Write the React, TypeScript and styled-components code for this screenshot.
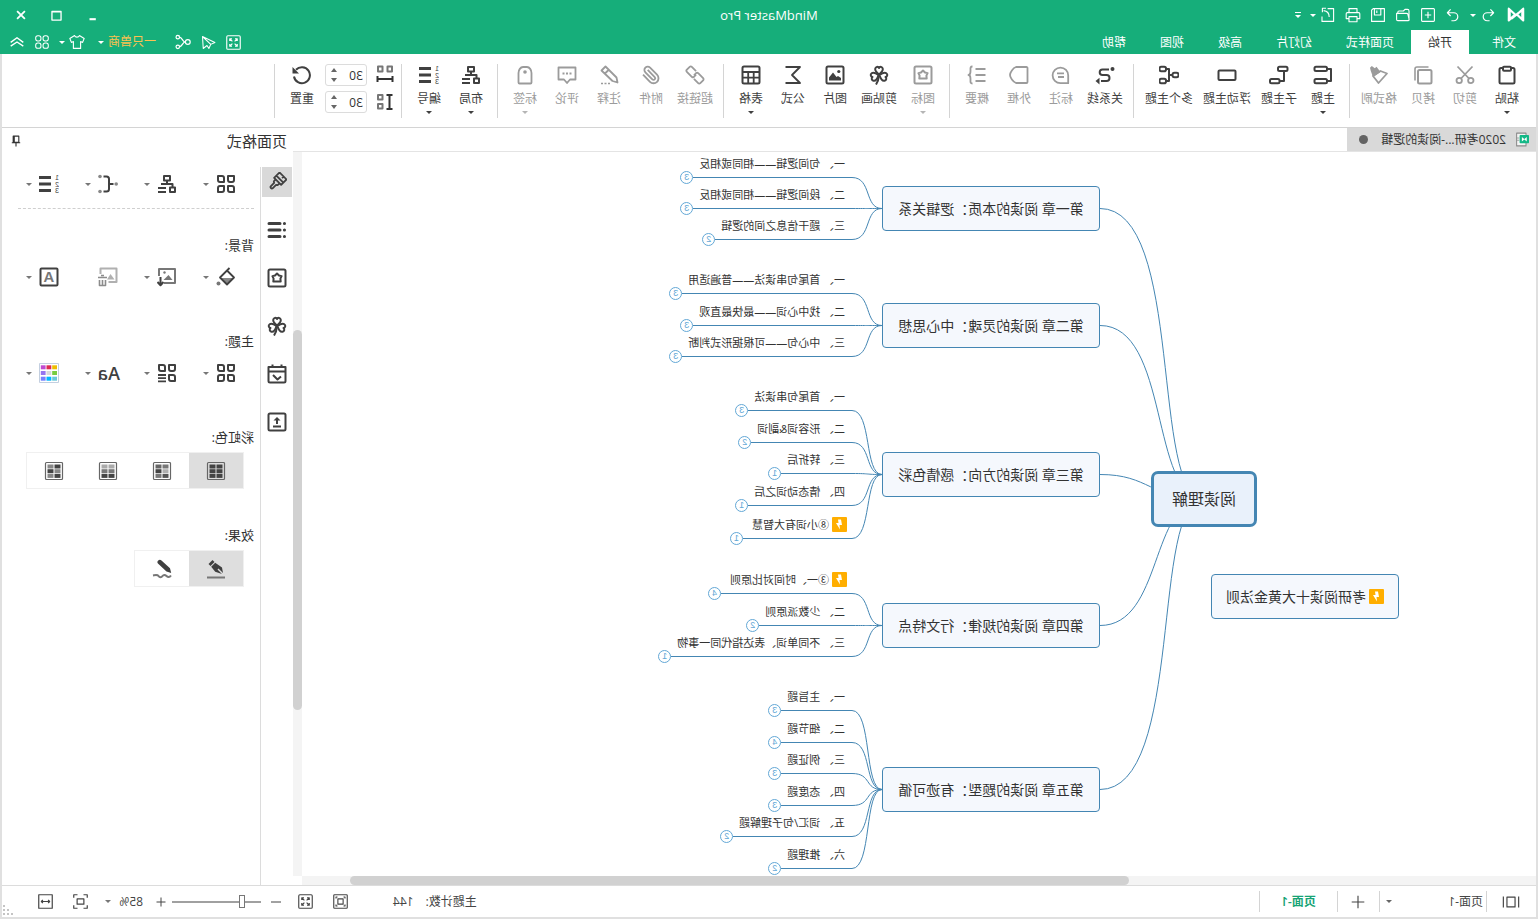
import React from "react";
import styled, { createGlobalStyle, css } from "styled-components";

const ink = "#404040";
const green = "#16ae7a";
const line = "#4486b3";
const rule = "#d4d4d4";

const GlobalStyle = createGlobalStyle`
  *, *::before, *::after { box-sizing: border-box; }
  body { margin: 0; background: #fff; }
  button, input, select { font: inherit; color: inherit; }
  button { border: 0; background: none; padding: 0; }
`;

/* The whole window is shown mirrored, as seen from behind the screen. */
const Window = styled.div`
  min-height: 100vh;
  display: flex;
  flex-direction: column;
  transform: scaleX(-1);
  font: 12px/16px "Open Sans", "Noto Sans CJK SC", sans-serif;
  color: #333;
  background: #fff;
`;

/* ---------- icons ---------- */

const Svg = styled.svg<{ $size: number; $weight: number }>`
  display: block;
  flex: none;
  width: ${(p) => p.$size}px;
  height: ${(p) => p.$size}px;
  fill: none;
  stroke: currentColor;
  stroke-width: ${(p) => p.$weight};
  stroke-linejoin: round;
`;

const Glyph = styled.text`
  fill: currentColor;
  stroke: none;
  font-family: "Liberation Sans", sans-serif;
`;

const threeSquares = (
  <>
    <path d="M2 2h6v4a2 2 0 0 1-2 2H4a2 2 0 0 1-2-2z" />
    <path d="M12 4a2 2 0 0 1 2-2h4v4a2 2 0 0 1-2 2h-4z" />
    <path d="M4 12h4v4a2 2 0 0 1-2 2H2v-4a2 2 0 0 1 2-2z" />
  </>
);

const clover = (
  <>
    <path d="M10 9.500C7 7 6 5.500 6.200 3.800 6.500 1.600 9 1.200 10 3c1-1.800 3.500-1.400 3.800.8C14 5.500 13 7 10 9.500z" />
    <path d="M9.500 10C6 7.500 4 7.200 2.700 8.200c-1.800 1.400-.9 3.400.8 3.800-1.400 1.200-.8 3.400 1 3.800C6.800 16.200 8.500 13.500 9.500 10z" />
    <path d="M10.500 10c3.500-2.500 5.500-2.800 6.800-1.800 1.800 1.400.9 3.400-.8 3.800 1.400 1.200.8 3.400-1 3.800-2.300.4-4-2.300-5-5.800z" />
    <path d="M10 10c.3 4 1.200 7 3 9.500" />
  </>
);

const numbering = (
  <>
    <path d="M8 3.500h12M8 10h12M8 16.500h12" strokeWidth="3" />
    <Glyph x="0" y="6" fontSize="7">1</Glyph>
    <Glyph x="0" y="12.500" fontSize="7">2</Glyph>
    <Glyph x="0" y="19" fontSize="7">3</Glyph>
  </>
);

const swatches = (colours: string[]) => (
  <>
    <rect x="1.500" y="1.500" width="17" height="17" rx="1" stroke="#666" strokeWidth="1.200" />
    {colours.map((c, i) => (
      <rect key={i} x={i % 2 ? 10.5 : 3.5} y={3.5 + Math.floor(i / 2) * 4.7} width="6" height="4" fill={c} stroke="none" />
    ))}
  </>
);

const icons: Record<string, React.ReactNode> = {
  paste: (
    <>
      <rect x="2.500" y="3" width="15" height="15.500" rx="1.500" />
      <rect x="6" y="1.800" width="8" height="4" rx="1" fill="#fff" />
    </>
  ),
  cut: (
    <>
      <circle cx="4.200" cy="15.500" r="2.700" strokeWidth="1.800" />
      <circle cx="15.800" cy="15.500" r="2.700" strokeWidth="1.800" />
      <path d="M2.500 1.500L14 13.500M17.500 1.500L6 13.500" strokeWidth="1.800" />
    </>
  ),
  copy: (
    <>
      <rect x="1.500" y="5" width="13.500" height="13.500" rx="1.500" />
      <path d="M4.500 2H16a2 2 0 0 1 2 2v11.500" strokeWidth="1.600" />
    </>
  ),
  brush: (
    <>
      <path d="M19 2.800L17.200 1l-3 2.300L12.500 1.800 8.500 7l7.500 5 2.200-6z" fill="currentColor" stroke="none" />
      <path d="M8.500 6L2 8.500l8.500 9.500 5.500-7z" strokeWidth="1.800" />
    </>
  ),
  topic: (
    <>
      <rect x="6" y="1.800" width="12.500" height="4.200" rx="1.500" />
      <rect x="6" y="14" width="12.500" height="4.200" rx="1.500" />
      <path d="M6 4H2v12h4" />
    </>
  ),
  subtopic: (
    <>
      <rect x="1.500" y="1.800" width="9.500" height="4.200" rx="1.500" />
      <rect x="9.500" y="14" width="9.500" height="4.200" rx="1.500" />
      <path d="M5 6v10h4.500" />
    </>
  ),
  floating: <rect x="1.500" y="5.500" width="17" height="9.500" rx="1" />,
  multi: (
    <>
      <rect x="0.500" y="7.800" width="6" height="4.400" rx="2" />
      <rect x="13" y="1.800" width="6.500" height="4.400" rx="1.800" />
      <rect x="13" y="13.800" width="6.500" height="4.400" rx="1.800" />
      <path d="M6.500 10H10M13 4h-3v12h3" />
    </>
  ),
  relation: (
    <>
      <path d="M6 4.500h6.500a2.800 2.800 0 0 1 0 5.600H8.500a3 3 0 0 0 0 6H14" />
      <circle cx="2.500" cy="4" r="2" fill="currentColor" stroke="none" />
      <path d="M15.500 12.800l4 3.300-4 3.300z" fill="currentColor" stroke="none" />
    </>
  ),
  callout: (
    <>
      <path d="M2.800 18.200V10.500a7.800 7.800 0 1 1 7.800 7.700z" strokeWidth="1.800" />
      <path d="M7 8.300h7M7 12h6" strokeWidth="1.800" />
    </>
  ),
  boundary: <path d="M2.500 2H13c3 1 6 5.500 6 8s-3 7-6 8H2.500a1 1 0 0 1-1-1V3a1 1 0 0 1 1-1z" strokeWidth="1.800" />,
  summary: (
    <>
      <path d="M1.500 4h10M1.500 10h10M1.500 16h10" />
      <path d="M14.500 1.500c2.500 0 2 1.500 2 4.500 0 2.500 0 4 2 4-2 0-2 1.500-2 4 0 3 .5 4.500-2 4.500" strokeWidth="1.800" />
    </>
  ),
  flower: (
    <>
      <rect x="1.500" y="1.500" width="17" height="17" rx="1.500" />
      <path d="M10 5.500l2 2 2.600.6-1.200 2.500.3 2.900H6.300l.3-2.900-1.200-2.500L8 7.500z" />
    </>
  ),
  clover,
  picture: (
    <>
      <rect x="1.500" y="1.500" width="17" height="17" rx="1.500" />
      <path d="M4 15.500v-2.500l3-2 1.500 1L12 7.500l4 5v3z" fill="currentColor" stroke="none" />
      <circle cx="6.200" cy="6.500" r="1.600" fill="currentColor" stroke="none" />
    </>
  ),
  sigma: <path d="M17.500 2H3l8 8-8 8h14.500" strokeWidth="1.800" />,
  table: (
    <>
      <rect x="1.500" y="1.500" width="17" height="17" rx="1.500" />
      <path d="M1.500 7h17M1.500 12.700h17M7.300 7v11.500M12.800 7v11.500" strokeWidth="1.800" />
    </>
  ),
  link: (
    <g transform="rotate(-45 10 10)" strokeWidth="1.800">
      <path d="M8 13.500H2A1.500 1.500 0 0 1 .5 12V8A1.500 1.500 0 0 1 2 6.500h7A1.500 1.500 0 0 1 10.500 8v3" />
      <path d="M12 6.500h6A1.500 1.500 0 0 1 19.500 8v4a1.500 1.500 0 0 1-1.500 1.500h-7A1.500 1.500 0 0 1 9.500 12V9" />
    </g>
  ),
  clip: (
    <g transform="scale(.83)" strokeWidth="2.200">
      <path d="m16 6-8.414 8.586a2 2 0 0 0 2.829 2.829l8.414-8.586a4 4 0 1 0-5.657-5.657l-8.379 8.551a6 6 0 1 0 8.485 8.485l8.379-8.551" />
    </g>
  ),
  note: (
    <>
      <path d="M13.500 1.500l4 4L6.500 16 1.500 17.500l1-5zM10 4.500l4.500 4.500" strokeWidth="1.800" />
      <path d="M9 18.500h10" strokeDasharray="2 1.500" strokeWidth="1.600" />
    </>
  ),
  comment: (
    <>
      <path d="M1.500 2.500h17v12h-5.500l-3 3.500-3-3.500H1.500z" strokeWidth="1.800" />
      <path d="M5.500 8.500h9.500" strokeDasharray="2 1.500" />
    </>
  ),
  tag: (
    <>
      <path d="M3.500 17.500V8c0-3 2-6 4.500-6h4c2.500 0 4.500 3 4.500 6v9.500a1 1 0 0 1-1 1h-11a1 1 0 0 1-1-1z" strokeWidth="1.800" />
      <circle cx="10" cy="7" r="1.800" fill="currentColor" stroke="none" />
    </>
  ),
  layout: <path d="M7 2h6v4.500H7zM2 13.500h5V18H2zM10 6.500V10M4.500 13.500V10H16M11 14h8M11 18h8" />,
  numbering,
  reset: (
    <>
      <path d="M16 4.800A8 8 0 1 0 18 11.500" />
      <path d="M19.500 2v6.500H13z" fill="currentColor" stroke="none" />
    </>
  ),
  hspace: (
    <>
      <path d="M3 1.500h4.500v5H3zM12.500 1.500H17v5h-4.500z" stroke="#777" />
      <path d="M2.500 14h15M2.500 11v6M17.500 11v6" />
    </>
  ),
  vspace: (
    <>
      <path d="M12.500 3H17v4.500h-4.500zM12.500 12H17v4.500h-4.500z" stroke="#777" />
      <path d="M5.500 3v14M2.500 3h6M2.500 17h6" />
    </>
  ),
  logo: <path d="M2 3l7 6.500L2 16zM18 3l-7 6.500L18 16zM3 4.500v11M17 4.500v11M5 6l10 8" strokeWidth="2.400" />,
  undo: <path d="M7 3L3 7.200l4 4M3.500 7.200H11a5 5 0 0 1 0 10H8" />,
  redo: <path d="M13 3l4 4.200-4 4M16.500 7.200H9a5 5 0 0 0 0 10h3" />,
  fresh: <path d="M3 2h14a1 1 0 0 1 1 1v14a1 1 0 0 1-1 1H3a1 1 0 0 1-1-1V3a1 1 0 0 1 1-1zM10 6v8M6 10h8" />,
  open: <path d="M2.500 16.500V5c0-1.500.5-2 2-2h3l2 2h5.500c1 0 1.500.7 1.500 2v1M5.500 8H18v7.500c0 1-.5 1.500-1.500 1.500H3.500c-1 0-1.500-.7-1.200-1.500L4 9c.2-.7.700-1 1.500-1z" />,
  save: <path d="M2 2h14l2 2v14H2zM6.500 2v8h8V2M11.500 4.500v3" />,
  print: <path d="M5 7V2h10v5M5 14.500H1.500V8.500C1.500 7.500 2 7 3 7h14c1 0 1.500.5 1.500 1.500v6H15M5 12h10v6.500H5z" />,
  export: <path d="M10.500 2H3v16h14.500v-6M8.500 12.500C8.500 8 11 5 15.500 4.500M12.500 1.500h4.500v5" />,
  fullscreen: (
    <>
      <rect x="1" y="1" width="18" height="18" rx="1.500" />
      <path d="M5 8V5h3M12 5h3v3M15 12v3h-3M8 15H5v-3M5 5l3.500 3.500M15 5l-3.500 3.500M15 15l-3.500-3.500M5 15l3.500-3.500" />
    </>
  ),
  send: <path d="M18 2L1.500 10l5.500 2.500L18 2l-1 16-5-4-2.500 4-2.500-5.500" />,
  share: (
    <>
      <circle cx="4" cy="10" r="3" />
      <circle cx="16.500" cy="4" r="2.200" />
      <circle cx="16.500" cy="16" r="2.200" />
      <path d="M7 10c4 0 3-5 7.300-6M7 10c4 0 3 5 7.300 6" />
    </>
  ),
  shirt: <path d="M7 2L1 5.500l2 5 2.500-1V18h9V9.500l2.500 1 2-5L13 2c-1 2.500-5 2.500-6 0z" />,
  apps: (
    <>
      <rect x="1" y="1" width="7.500" height="7.500" rx="3" />
      <rect x="11.500" y="1" width="7.500" height="7.500" rx="3" />
      <rect x="1" y="11.500" width="7.500" height="7.500" rx="3" />
      <rect x="11.500" y="11.500" width="7.500" height="7.500" rx="3" />
    </>
  ),
  collapse: <path d="M1 10.500l9-6.500 9 6.500M1 16l9-6 9 6" />,
  minimize: <path d="M6 16h9" strokeWidth="3" />,
  maximize: <path d="M3 3.500h14v13.500H3zM3 4.500h14" />,
  close: <path d="M3.500 3.500l13 13M16.500 3.500l-13 13" />,
  doc: (
    <>
      <path d="M4 1.500h12.500v17H4z" stroke="#8a8a8a" strokeWidth="1.400" fill="#f4f4f4" />
      <path d="M13 8h3M13 11h3" stroke="#8a8a8a" strokeWidth="1" />
      <rect x="0" y="4" width="12.500" height="11" rx="1" fill="#12b886" stroke="none" />
      <path d="M3 6.500v6l3.500-3zM9.500 6.500v6L6 9.500z" fill="#fff" stroke="none" />
    </>
  ),
  pin: <path d="M6 3h8v9H6zM4 12.500h12M10 13v5M12.500 3v9" />,
  paint: (
    <>
      <path d="M2.500 11h13L9 17.500z" fill="#888" stroke="none" />
      <path d="M9 3.500l7 7L9 17.500l-7-7zM6.500 1L10 4.500" strokeWidth="1.800" />
      <circle cx="17.500" cy="16.500" r="2" fill="#777" stroke="none" />
    </>
  ),
  list: (
    <>
      <path d="M7 3.500h11M7 10h11M7 16.500h11" strokeWidth="3" strokeLinecap="round" />
      <path d="M2.500 3.500h.1M2.500 10h.1M2.500 16.500h.1" strokeWidth="3" strokeLinecap="round" />
    </>
  ),
  format: (
    <g transform="translate(1 1) scale(.9) rotate(-45 10 10)">
      <path d="M4.500 .5h11v8.500h-11zM4.500 5.500h11M9 .5v2.500M7 9v3l1.500 1v5a1.500 1.500 0 0 0 3 0v-5l1.500-1V9" />
    </g>
  ),
  calendar: <path d="M1.500 3h17v14a1.500 1.500 0 0 1-1.500 1.500H3A1.500 1.500 0 0 1 1.500 17zM1.500 7.500h17M5.500 .5v3M14.500 .5v3M14 11l-4.500 4.500-3.500-3" />,
  upload: (
    <>
      <rect x="1.500" y="1.500" width="17" height="17" rx="1.500" />
      <path d="M10 12V6M6 14.500h8" />
      <path d="M6.500 8.500L10 5l3.500 3.500z" fill="currentColor" stroke="none" />
    </>
  ),
  four: (
    <>
      {threeSquares}
      <path d="M12 12h4a2 2 0 0 1 2 2v4h-4a2 2 0 0 1-2-2z" />
    </>
  ),
  fourList: (
    <>
      {threeSquares}
      <path d="M11 12h8M11 15.200h8M11 18.400h8" strokeWidth="1.800" />
    </>
  ),
  bracket: (
    <>
      <path d="M4.500 10H9M14.500 2.500h-3C9.500 2.500 9 3 9 5v10c0 2 .5 2.500 2.500 2.500h3" />
      <circle cx="1.800" cy="10" r="1.800" fill="#888" stroke="none" />
      <circle cx="18" cy="2.500" r="1.800" fill="#888" stroke="none" />
      <circle cx="18" cy="17.500" r="1.800" fill="#888" stroke="none" />
    </>
  ),
  insertPic: (
    <>
      <path d="M13 16H2V2h16v7" stroke="#777" />
      <path d="M4.500 13l4-5 5 5z" fill="#777" stroke="none" />
      <circle cx="12.500" cy="5.500" r="1.200" fill="#777" stroke="none" />
      <path d="M16.500 10v8M13.500 15l3 3.200 3-3.200" />
    </>
  ),
  deletePic: (
    <>
      <path d="M9.500 15H1.500V1.500h16V7" />
      <path d="M3.500 12.500l4-5.500 3.500 5.500z" fill="currentColor" stroke="none" />
      <path d="M11 10.500h9M12.500 13v5.500h6V13M15.500 13v5M14 8.500h3" stroke="#8c8c8c" strokeWidth="1.600" />
    </>
  ),
  letter: (
    <>
      <rect x="1.500" y="1.500" width="17" height="17" rx="1" />
      <Glyph x="4.700" y="15" fontSize="15" fontWeight="bold" opacity=".7">A</Glyph>
    </>
  ),
  palette: (
    <>
      <rect x="0.500" y="0.500" width="19" height="19" stroke="#c3cfe0" strokeWidth="1" />
      {["#edbd00", "#de2b4f", "#c04bd0", "#77cc3f", "#d9d9d9", "#9575f0", "#6bc9d9", "#00b7ff", "#7582ff"].map((c, i) => (
        <rect key={c} x={2 + (i % 3) * 5.7} y={2.3 + Math.floor(i / 3) * 5.7} width="4.800" height="4" fill={c} stroke="none" />
      ))}
    </>
  ),
  rainbow1: swatches(["#444", "#444", "#444", "#444", "#444", "#444"]),
  rainbow2: swatches(["#777", "#666", "#b0b0b0", "#444", "#555", "#777"]),
  rainbow3: swatches(["#aaa", "#aaa", "#777", "#777", "#444", "#444"]),
  rainbow4: swatches(["#444", "#888", "#888", "#444", "#444", "#888"]),
  pen: (
    <>
      <path d="M1 18.500h18" stroke="#777" />
      <path d="M13.500 1l4 4-2 2-4-4zM10.800 3.700l4 4-4 5L4 15l4.500-4.500-1-1L3 14l1-5.500z" fill="currentColor" stroke="none" />
    </>
  ),
  pencil: (
    <>
      <path d="M1 16.500c1.500 2 3 2 4.500.500s3-1.500 4 0 3 1.500 4 0 2.500-1 5.500-.500" stroke="#777" />
      <path d="M10.500 1.500a2.300 2.300 0 0 1 3.300 3.300L5.500 12.500.8 14l1.200-4.800z" fill="currentColor" stroke="none" />
    </>
  ),
  pageView: <path d="M5.500 4.500h9v11h-9zM1.500 4v12M18.500 4v12" />,
  plus: <path d="M10 1v18M1 10h18" />,
  minus: <path d="M0 10h20" />,
  fitPage: (
    <>
      <rect x="1" y="1" width="18" height="18" rx="1" />
      <path d="M6.500 6.500h7v7h-7zM4 6V4h2M14 4h2v2M16 14v2h-2M6 16H4v-2" />
    </>
  ),
  fitSel: <path d="M5.500 6.500h9v7h-9zM1 5V1h5M14 1h5v4M19 15v4h-5M6 19H1v-4" />,
  fitWidth: <path d="M1 1h18v18H1zM4 10h12M6.500 8l-2 2 2 2M13.500 8l2 2-2 2" />,
};

const Icon = ({ name, size = 20, weight = 2 }: { name: string; size?: number; weight?: number }) => (
  <Svg $size={size} $weight={weight} viewBox="0 0 20 20" aria-hidden="true">
    {icons[name]}
  </Svg>
);

const Caret = styled.span<{ $color?: string }>`
  display: block;
  flex: none;
  width: 0;
  height: 0;
  border: 3px solid transparent;
  border-top-color: ${(p) => p.$color ?? ink};
  border-bottom: 0;
`;

/* ---------- header ---------- */

const Header = styled.header`
  background: ${green};
  color: #fff;
`;

const TitleBar = styled.div`
  display: grid;
  grid-template-columns: 1fr auto 1fr;
  align-items: center;
  height: 30px;
`;

const QuickAccess = styled.div`
  display: flex;
  align-items: center;
  gap: 9px;
  padding-left: 13px;
`;

const Logo = styled.span`
  margin-right: 2px;
`;

const QuickButton = styled.button`
  display: flex;
  align-items: center;
  justify-content: center;
  width: 16px;
  height: 20px;
`;

const MenuButton = styled(QuickButton)`
  width: 6px;
  margin-left: -5px;
`;

const CustomizeButton = styled(QuickButton)`
  width: 6px;
`;

const DoubleCaret = styled.span`
  width: 6px;
  padding-top: 2px;
  border-top: 1px solid #fff;
`;

const Title = styled.h1`
  margin: 0;
  font: inherit;
  font-size: 13px;
`;

const WindowControls = styled.div`
  display: flex;
  justify-content: flex-end;
  align-items: center;
  gap: 20px;
  padding-right: 13px;
`;

const TabRow = styled.div`
  display: flex;
  align-items: stretch;
  height: 24px;
`;

const Tab = styled.button<{ $active?: boolean; $first?: boolean }>`
  padding: 2px 17px 0 ${(p) => (p.$first ? 22 : 17)}px;
  height: 24px;
  margin-right: ${(p) => (p.$first ? 6 : 0)}px;
  ${(p) =>
    p.$active &&
    css`
      background: #fff;
      color: #333;
    `}
`;

const Account = styled.div`
  display: flex;
  align-items: center;
  gap: 9px;
  margin-left: auto;
  padding-right: 9px;
`;

const UserButton = styled.button`
  display: flex;
  align-items: center;
  gap: 4px;
  margin: 0 4px 0 10px;
  color: #fdc150;
`;

/* ---------- body frame and ribbon ---------- */

const Frame = styled.div`
  flex: 1;
  display: flex;
  flex-direction: column;
  border: 2px solid #e0e0e0;
  border-top: 0;
`;

const Ribbon = styled.div`
  display: flex;
  height: 74px;
  padding: 10px 0 9px 8px;
  border-bottom: 1px solid ${rule};
`;

const Tool = styled.button<{ $muted?: boolean }>`
  display: flex;
  flex-direction: column;
  align-items: center;
  min-width: 42px;
  padding: 1px 5px 0;
  white-space: nowrap;
  color: ${(p) => (p.$muted ? "#9b9b9b" : ink)};
`;

const ToolLabel = styled.span`
  height: 22px;
  padding-top: 6px;
  margin-bottom: 4px;
  line-height: 16px;
`;

const Separator = styled.span`
  flex: none;
  width: 1px;
  margin: 0 5px 0 6px;
  background: ${rule};
`;

const Spacing = styled.div`
  display: grid;
  grid-template-rows: 22px 22px;
  row-gap: 5px;
  align-content: start;
  margin: 0 2px 0 1px;
`;

const SpacingRow = styled.div`
  display: flex;
  align-items: center;
  gap: 8px;
`;

const Spinner = styled.span`
  display: flex;
  align-items: center;
  width: 42px;
  height: 22px;
  padding: 0 5px 0 3px;
  border: 1px solid #dcdcdc;
  border-radius: 3px;
`;

const SpinInput = styled.input`
  flex: 1;
  min-width: 0;
  width: 20px;
  height: 18px;
  padding: 0;
  border: 0;
  outline: 0;
`;

const SpinButtons = styled.span`
  display: flex;
  flex-direction: column;
  gap: 6px;
`;

const SpinButton = styled.button<{ $up?: boolean }>`
  width: 6px;
  height: 4px;
  border: 3px solid transparent;
  border-${(p) => (p.$up ? "bottom" : "top")}: 4px solid #666;
  border-${(p) => (p.$up ? "top" : "bottom")}: 0;
`;

/* ---------- work area ---------- */

const Work = styled.div`
  flex: 1;
  display: flex;
  min-height: 0;
`;

const Editor = styled.main`
  flex: 1;
  min-width: 0;
  display: flex;
  flex-direction: column;
`;

const DocTabs = styled.div`
  display: flex;
  height: 24px;
  border-bottom: 1px solid #e4e4e4;
`;

const DocTab = styled.button`
  display: flex;
  align-items: center;
  width: 189px;
  padding: 0 6px 0 7px;
  background: #d9d9d9;
  gap: 8px;
`;

const UnsavedDot = styled.span`
  width: 9px;
  height: 9px;
  margin: 0 6px 0 auto;
  border-radius: 50%;
  background: #636363;
`;

const CanvasArea = styled.div`
  flex: 1;
  display: grid;
  grid-template-columns: 1fr 9px;
  grid-template-rows: 1fr 9px;
`;

const Canvas = styled.div`
  position: relative;
  overflow: hidden;
  min-height: 724px;
`;

const Track = styled.div<{ $vertical?: boolean }>`
  display: grid;
  background: #f4f4f4;
  ${(p) =>
    p.$vertical
      ? "grid-template-rows: 178fr 380fr 166fr;"
      : "grid-template-columns: 407fr 779fr 48fr;"}
`;

const Thumb = styled.div<{ $vertical?: boolean }>`
  ${(p) => (p.$vertical ? "grid-row: 2;" : "grid-column: 2;")}
  border-radius: 5px;
  background: #d1d1d1;
`;

const Links = styled.svg`
  position: absolute;
  inset: 0;
  width: 100%;
  height: 100%;
  fill: none;
  stroke: ${line};
`;

const Box = styled.div<{ $x: number; $y: number; $w: number; $root?: boolean }>`
  position: absolute;
  left: ${(p) => p.$x}px;
  top: ${(p) => p.$y}px;
  width: ${(p) => p.$w}px;
  height: ${(p) => (p.$root ? 56 : 45)}px;
  display: flex;
  align-items: center;
  justify-content: center;
  gap: 3px;
  border: ${(p) => (p.$root ? 3 : 1)}px solid ${line};
  border-radius: ${(p) => (p.$root ? 7 : 4)}px;
  background: ${(p) => (p.$root ? "#e9f1fb" : "#f5f8fd")};
  font-size: ${(p) => (p.$root ? 16 : 14)}px;
  line-height: 20px;
  white-space: nowrap;
`;

const Leaf = styled.div<{ $y: number }>`
  position: absolute;
  left: 684px;
  top: ${(p) => p.$y - 21}px;
  display: flex;
  align-items: flex-start;
`;

const LeafText = styled.div<{ $flagged?: boolean }>`
  display: flex;
  gap: 3px;
  height: 22px;
  padding: ${(p) => (p.$flagged ? "0 9px 5px 5px" : "0 6px 5px 7px")};
  border-bottom: 1px solid ${line};
  font-size: 11px;
  line-height: 16px;
  white-space: nowrap;
`;

const Count = styled.button`
  width: 13px;
  height: 13px;
  margin-top: 15px;
  border: 1px solid #63a8d6;
  border-radius: 50%;
  font: 9px/11px "Liberation Sans", sans-serif;
  color: #63a8d6;
  text-align: center;
`;

const Flag = styled.svg`
  display: block;
  flex: none;
  width: 15px;
  height: 15px;
`;

const Bolt = () => (
  <Flag viewBox="0 0 15 15" aria-hidden="true">
    <rect width="15" height="15" rx="1" fill="#ffae00" />
    <path d="M6 2.500h3L8.500 6H11l-4 6.500L7.500 8H5z" fill="#fff" />
  </Flag>
);

type LeafData = { y: number; text: string; n: number; flag?: boolean };

const chapters: { y: number; title: string; leaves: LeafData[] }[] = [
  {
    y: 34,
    title: "第一章 阅读的本质：逻辑关系",
    leaves: [
      { y: 25, text: "一、 句间逻辑——相同或相反", n: 3 },
      { y: 56, text: "二、 段间逻辑——相同或相反", n: 3 },
      { y: 87, text: "三、 题干信息之间的逻辑", n: 2 },
    ],
  },
  {
    y: 151,
    title: "第二章 阅读的灵魂：中心思想",
    leaves: [
      { y: 141, text: "一、 首尾句串读法——普遍适用", n: 3 },
      { y: 173, text: "二、 找中心词——最快最直观", n: 3 },
      { y: 204, text: "三、 中心句——可根据形式判断", n: 3 },
    ],
  },
  {
    y: 300,
    title: "第三章 阅读的方向：感情色彩",
    leaves: [
      { y: 258, text: "一、 首尾句串读法", n: 3 },
      { y: 290, text: "二、 形容词&副词", n: 2 },
      { y: 321, text: "三、 转折后", n: 1 },
      { y: 353, text: "四、 情态动词之后", n: 1 },
      { y: 386, text: "⑧小词有大智慧", n: 1, flag: true },
    ],
  },
  {
    y: 451,
    title: "第四章 阅读的规律：行文特点",
    leaves: [
      { y: 441, text: "③一、时间对比原则", n: 4, flag: true },
      { y: 473, text: "二、 少数派原则", n: 2 },
      { y: 504, text: "三、 不同单词、表达指代同一事物", n: 1 },
    ],
  },
  {
    y: 615,
    title: "第五章 阅读的题型：有迹可循",
    leaves: [
      { y: 558, text: "一、 主旨题", n: 3 },
      { y: 590, text: "二、 细节题", n: 4 },
      { y: 621, text: "三、 例证题", n: 3 },
      { y: 653, text: "四、 态度题", n: 3 },
      { y: 684, text: "五、 词汇/句子理解题", n: 2 },
      { y: 716, text: "六、 推理题", n: 2 },
    ],
  },
];

const rootY = 347;

/* The farther a chapter is from the root, the steeper its branch. */
const branch = (cy: number) => {
  const bend = Math.round(389 - Math.abs(cy - rootY) * 0.13);
  return `M332 ${rootY}C386 ${rootY} ${bend} ${cy} 436 ${cy}`;
};

const MindMap = () => (
  <Canvas>
    <Links aria-hidden="true">
      {chapters.map((c) => {
        const cy = c.y + 22.5;
        return (
          <g key={c.y}>
            <path d={branch(cy)} />
            {c.leaves.map((l) => (
              <path key={l.y} d={`M654 ${cy}C672 ${cy} 664 ${l.y + 0.5} 684 ${l.y + 0.5}`} />
            ))}
          </g>
        );
      })}
    </Links>
    <Box $x={279} $y={319} $w={106} $root>阅读理解</Box>
    <Box $x={137} $y={422} $w={188}>
      <Bolt />
      考研阅读十大黄金法则
    </Box>
    {chapters.map((c) => (
      <React.Fragment key={c.y}>
        <Box $x={436} $y={c.y} $w={218}>{c.title}</Box>
        {c.leaves.map((l) => (
          <Leaf key={l.y} $y={l.y}>
            <LeafText $flagged={l.flag}>
              {l.flag && <Bolt />}
              {l.text}
            </LeafText>
            <Count>{l.n}</Count>
          </Leaf>
        ))}
      </React.Fragment>
    ))}
  </Canvas>
);

/* ---------- side panel ---------- */

const Side = styled.aside`
  flex: none;
  width: 291px;
  display: flex;
  flex-direction: column;
`;

const SideHeader = styled.div`
  display: flex;
  align-items: center;
  justify-content: space-between;
  height: 39px;
  padding: 0 6px 14px;
`;

const SideTitle = styled.h2`
  margin: 0;
  font: inherit;
  font-size: 15px;
  line-height: 24px;
`;

const SideBody = styled.div`
  flex: 1;
  display: flex;
`;

const Strip = styled.nav`
  display: flex;
  flex-direction: column;
  gap: 18px;
  width: 33px;
  padding-left: 1px;
  border-right: 1px solid #dcdcdc;
`;

const StripButton = styled.button<{ $active?: boolean }>`
  display: flex;
  align-items: center;
  justify-content: center;
  width: 30px;
  height: 30px;
  color: ${ink};
  background: ${(p) => (p.$active ? "#d9d9d9" : "none")};
`;

const Panel = styled.div`
  flex: 1;
  padding: 0 16px 0 6px;
`;

const OptionRow = styled.div<{ $ruled?: boolean }>`
  display: grid;
  grid-template-columns: repeat(4, 59px);
  height: ${(p) => (p.$ruled ? 42 : 24)}px;
  padding-top: ${(p) => (p.$ruled ? 5 : 0)}px;
  ${(p) => p.$ruled && "border-bottom: 1px dashed #cfcfcf;"}
`;

const Option = styled.button<{ $muted?: boolean }>`
  display: flex;
  align-items: center;
  gap: 7px;
  height: 24px;
  padding-left: 18px;
  color: ${(p) => (p.$muted ? "#b0b0b0" : ink)};
`;

const FontMark = styled.span`
  width: 22px;
  margin: 0 0 0 -2px;
  font-size: 18px;
  line-height: 24px;
  font-weight: 600;
`;

const Section = styled.section`
  display: flex;
  flex-direction: column;
  gap: 12px;
  padding-top: 28px;
  margin-bottom: 16px;
`;

const SectionTitle = styled.h3`
  margin: 0;
  font-size: 13px;
  line-height: 16px;
  font-weight: 400;
`;

const Segments = styled.div`
  display: flex;
  align-self: flex-start;
  height: 37px;
  margin: -5px 0 -6px 10px;
  border: 1px solid #f0f0f0;
`;

const Segment = styled.button<{ $active?: boolean }>`
  display: flex;
  align-items: center;
  justify-content: center;
  width: 54px;
  color: ${ink};
  background: ${(p) => (p.$active ? "#dedede" : "none")};
`;

const OptionButton = ({ name, label, muted, bare }: { name: string; label: string; muted?: boolean; bare?: boolean }) => (
  <Option $muted={muted} aria-label={label}>
    {name === "font" ? <FontMark>Aa</FontMark> : <Icon name={name} />}
    {!bare && <Caret $color="#777" />}
  </Option>
);

/* ---------- status bar ---------- */

const StatusBar = styled.footer`
  display: flex;
  align-items: center;
  height: 32px;
  border-top: 1px solid #dcdcdc;
  color: #444;
`;

const StatusButton = styled.button<{ $w: number }>`
  display: flex;
  align-items: center;
  justify-content: center;
  width: ${(p) => p.$w}px;
  height: 24px;
`;

const StatusRule = styled.span`
  width: 1px;
  height: 21px;
  background: ${rule};
`;

const PageSelectWrap = styled.div`
  display: flex;
  align-items: center;
  width: 106px;
  padding: 0 6px 0 3px;
`;

const PageSelect = styled.select`
  flex: 1;
  appearance: none;
  border: 0;
  outline: 0;
  background: none;
  padding: 0;
`;

const PageTab = styled.button`
  width: 77px;
  height: 24px;
  color: #16a375;
  font-weight: 600;
`;

const TopicCount = styled.div`
  display: flex;
  gap: 12px;
  margin-left: auto;
  margin-right: 35px;
`;

const Zoom = styled.input`
  appearance: none;
  width: 89px;
  height: 14px;
  margin: 0 3px;
  background: linear-gradient(#a0a0a0, #a0a0a0) center / 100% 2px no-repeat;
  &::-webkit-slider-thumb {
    appearance: none;
    width: 6px;
    height: 13px;
    border: 1px solid #777;
    background: #fff;
  }
`;

const ZoomValue = styled.output`
  width: 28px;
  margin-left: 10px;
`;

const Grip = styled.svg`
  align-self: flex-end;
  width: 11px;
  height: 12px;
  margin: 0 1px 1px 17px;
  fill: #c4c4c4;
`;

type ToolData = [icon: string, label: string, muted?: boolean, menu?: boolean];

const toolGroups: ToolData[][] = [
  [["paste", "粘贴", false, true], ["cut", "剪切", true], ["copy", "拷贝", true], ["brush", "格式刷", true]],
  [["topic", "主题", false, true], ["subtopic", "子主题"], ["floating", "浮动主题"], ["multi", "多个主题"]],
  [["relation", "关系线"], ["callout", "标注", true], ["boundary", "外框", true], ["summary", "概要", true]],
  [["flower", "图标", true, true], ["clover", "剪贴画"], ["picture", "图片"], ["sigma", "公式"], ["table", "表格", false, true]],
  [["link", "超链接", true], ["clip", "附件", true], ["note", "注释", true], ["comment", "评论", true], ["tag", "标签", true, true]],
  [["layout", "布局", false, true], ["numbering", "编号", false, true]],
];

const ToolButton = ({ tool: [icon, label, muted, menu] }: { tool: ToolData }) => (
  <Tool $muted={muted}>
    <Icon name={icon} />
    <ToolLabel>{label}</ToolLabel>
    {menu && <Caret $color={muted ? "#b5b5b5" : ink} />}
  </Tool>
);

const SpinField = ({ icon, label }: { icon: string; label: string }) => (
  <SpacingRow>
    <Icon name={icon} />
    <Spinner>
      <SpinInput defaultValue="30" aria-label={label} />
      <SpinButtons>
        <SpinButton $up aria-label="增加" />
        <SpinButton aria-label="减少" />
      </SpinButtons>
    </Spinner>
  </SpacingRow>
);

const quickIcons: [string, string][] = [
  ["fresh", "新建"],
  ["open", "打开"],
  ["save", "保存"],
  ["print", "打印"],
  ["export", "导出"],
];

export default function App() {
  return (
    <>
      <GlobalStyle />
      <Window>
        <Header>
          <TitleBar>
            <QuickAccess>
              <Logo><Icon name="logo" size={18} /></Logo>
              <QuickButton aria-label="撤销"><Icon name="undo" size={16} weight={1.5} /></QuickButton>
              <MenuButton aria-label="撤销记录"><Caret $color="#fff" /></MenuButton>
              <QuickButton aria-label="重做"><Icon name="redo" size={16} weight={1.5} /></QuickButton>
              {quickIcons.map(([name, label]) => (
                <QuickButton key={name} aria-label={label}><Icon name={name} size={16} weight={1.4} /></QuickButton>
              ))}
              <MenuButton aria-label="导出选项"><Caret $color="#fff" /></MenuButton>
              <CustomizeButton aria-label="自定义"><DoubleCaret><Caret $color="#fff" /></DoubleCaret></CustomizeButton>
            </QuickAccess>
            <Title>MindMaster Pro</Title>
            <WindowControls>
              <QuickButton aria-label="最小化"><Icon name="minimize" size={14} /></QuickButton>
              <QuickButton aria-label="最大化"><Icon name="maximize" size={13} /></QuickButton>
              <QuickButton aria-label="关闭"><Icon name="close" size={12} weight={3} /></QuickButton>
            </WindowControls>
          </TitleBar>
          <TabRow>
            <Tab $first>文件</Tab>
            <Tab $active>开始</Tab>
            {["页面样式", "幻灯片", "高级", "视图", "帮助"].map((t) => (
              <Tab key={t}>{t}</Tab>
            ))}
            <Account>
              <QuickButton aria-label="全屏"><Icon name="fullscreen" size={15} weight={1.5} /></QuickButton>
              <QuickButton aria-label="发送"><Icon name="send" size={15} weight={1.4} /></QuickButton>
              <QuickButton aria-label="分享"><Icon name="share" size={16} weight={1.5} /></QuickButton>
              <UserButton>一只兽商<Caret $color="#fff" /></UserButton>
              <QuickButton aria-label="皮肤"><Icon name="shirt" size={16} weight={1.4} /></QuickButton>
              <MenuButton aria-label="皮肤选项"><Caret $color="#fff" /></MenuButton>
              <QuickButton aria-label="应用"><Icon name="apps" size={14} weight={1.5} /></QuickButton>
              <QuickButton aria-label="折叠"><Icon name="collapse" size={14} weight={2} /></QuickButton>
            </Account>
          </TabRow>
        </Header>

        <Frame>
          <Ribbon>
            {toolGroups.map((group, i) => (
              <React.Fragment key={i}>
                {group.map((tool) => (
                  <ToolButton key={tool[0]} tool={tool} />
                ))}
                <Separator />
              </React.Fragment>
            ))}
            <Spacing>
              <SpinField icon="hspace" label="水平间距" />
              <SpinField icon="vspace" label="垂直间距" />
            </Spacing>
            <ToolButton tool={["reset", "重置"]} />
            <Separator />
          </Ribbon>

          <Work>
            <Editor>
              <DocTabs>
                <DocTab>
                  <Icon name="doc" size={15} />
                  2020考研...-阅读的逻辑
                  <UnsavedDot />
                </DocTab>
              </DocTabs>
              <CanvasArea>
                <MindMap />
                <Track $vertical><Thumb $vertical /></Track>
                <Track><Thumb /></Track>
              </CanvasArea>
            </Editor>

            <Side>
              <SideHeader>
                <SideTitle>页面格式</SideTitle>
                <QuickButton aria-label="固定"><Icon name="pin" size={14} weight={1.6} /></QuickButton>
              </SideHeader>
              <SideBody>
                <Strip>
                  <StripButton $active aria-label="格式"><Icon name="format" /></StripButton>
                  <StripButton aria-label="大纲"><Icon name="list" /></StripButton>
                  <StripButton aria-label="图标"><Icon name="flower" /></StripButton>
                  <StripButton aria-label="剪贴画"><Icon name="clover" /></StripButton>
                  <StripButton aria-label="任务"><Icon name="calendar" /></StripButton>
                  <StripButton aria-label="导出"><Icon name="upload" /></StripButton>
                </Strip>
                <Panel>
                  <OptionRow $ruled>
                    <OptionButton name="four" label="主题样式" />
                    <OptionButton name="layout" label="布局" />
                    <OptionButton name="bracket" label="连线样式" />
                    <OptionButton name="numbering" label="编号" />
                  </OptionRow>
                  <Section>
                    <SectionTitle>背景:</SectionTitle>
                    <OptionRow>
                      <OptionButton name="paint" label="填充" />
                      <OptionButton name="insertPic" label="插入图片" />
                      <OptionButton name="deletePic" label="删除图片" muted bare />
                      <OptionButton name="letter" label="水印" />
                    </OptionRow>
                  </Section>
                  <Section>
                    <SectionTitle>主题:</SectionTitle>
                    <OptionRow>
                      <OptionButton name="four" label="主题" />
                      <OptionButton name="fourList" label="主题列表" />
                      <OptionButton name="font" label="主题字体" />
                      <OptionButton name="palette" label="主题颜色" />
                    </OptionRow>
                  </Section>
                  <Section>
                    <SectionTitle>彩虹色:</SectionTitle>
                    <Segments>
                      {["rainbow1", "rainbow2", "rainbow3", "rainbow4"].map((n, i) => (
                        <Segment key={n} $active={i === 0} aria-label={`彩虹色 ${i + 1}`}><Icon name={n} /></Segment>
                      ))}
                    </Segments>
                  </Section>
                  <Section>
                    <SectionTitle>效果:</SectionTitle>
                    <Segments>
                      <Segment $active aria-label="常规"><Icon name="pen" /></Segment>
                      <Segment aria-label="手绘"><Icon name="pencil" /></Segment>
                    </Segments>
                  </Section>
                </Panel>
              </SideBody>
            </Side>
          </Work>

          <StatusBar>
            <StatusButton $w={49} aria-label="页面视图"><Icon name="pageView" size={18} weight={1.3} /></StatusButton>
            <StatusRule />
            <PageSelectWrap>
              <PageSelect aria-label="页面">
                <option>页面-1</option>
              </PageSelect>
              <Caret $color="#666" />
            </PageSelectWrap>
            <StatusRule />
            <StatusButton $w={41} aria-label="添加页面"><Icon name="plus" size={14} weight={1.6} /></StatusButton>
            <StatusRule />
            <PageTab>页面-1</PageTab>
            <StatusRule />
            <TopicCount>
              <span>主题计数:</span>
              <span>144</span>
            </TopicCount>
            <StatusButton $w={35} aria-label="适合页面"><Icon name="fitPage" size={15} weight={1.5} /></StatusButton>
            <StatusButton $w={35} aria-label="全屏"><Icon name="fullscreen" size={15} weight={1.5} /></StatusButton>
            <StatusButton $w={24} aria-label="缩小"><Icon name="minus" size={10} /></StatusButton>
            <Zoom type="range" min={10} max={400} defaultValue={85} aria-label="缩放" />
            <StatusButton $w={16} aria-label="放大"><Icon name="plus" size={10} weight={2} /></StatusButton>
            <ZoomValue>85%</ZoomValue>
            <StatusButton $w={14} aria-label="缩放比例"><Caret $color="#777" /></StatusButton>
            <StatusButton $w={40} aria-label="适合所选"><Icon name="fitSel" size={15} weight={1.6} /></StatusButton>
            <StatusButton $w={30} aria-label="适合宽度"><Icon name="fitWidth" size={15} weight={1.6} /></StatusButton>
            <Grip viewBox="0 0 11 12" aria-hidden="true">
              <path d="M9 1h2v2H9zM5 5h2v2H5zM9 5h2v2H9zM1 9h2v2H1zM5 9h2v2H5zM9 9h2v2H9z" />
            </Grip>
          </StatusBar>
        </Frame>
      </Window>
    </>
  );
}
